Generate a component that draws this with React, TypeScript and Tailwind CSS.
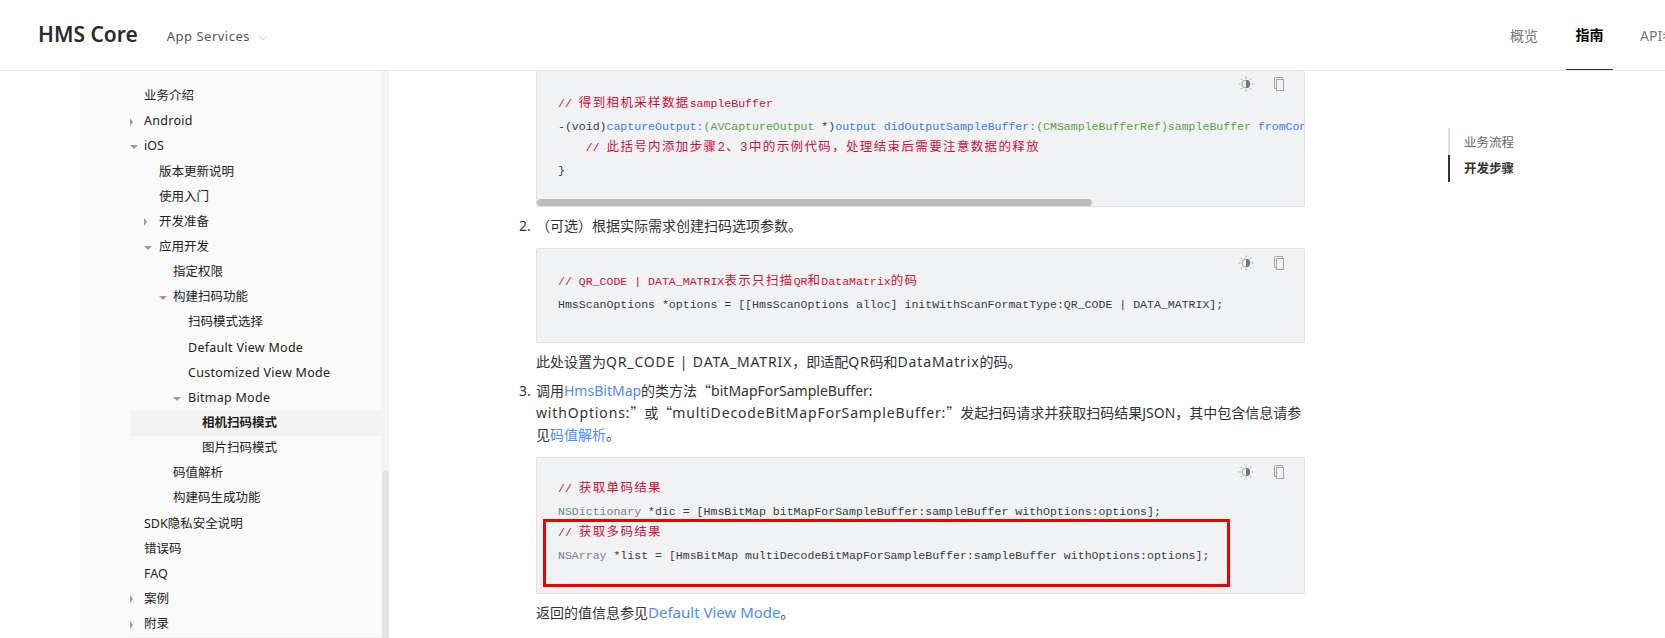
import { type ReactNode } from 'react';
import { ChevronDown } from 'lucide-react';

interface NavRow {
  label: string;
  level: number;
  caret?: 'right' | 'down';
  active?: boolean;
  latin?: boolean;
}

const navRows: NavRow[] = [
  { label: '业务介绍', level: 0 },
  { label: 'Android', level: 0, caret: 'right', latin: true },
  { label: 'iOS', level: 0, caret: 'down' },
  { label: '版本更新说明', level: 1 },
  { label: '使用入门', level: 1 },
  { label: '开发准备', level: 1, caret: 'right' },
  { label: '应用开发', level: 1, caret: 'down' },
  { label: '指定权限', level: 2 },
  { label: '构建扫码功能', level: 2, caret: 'down' },
  { label: '扫码模式选择', level: 3 },
  { label: 'Default View Mode', level: 3, latin: true },
  { label: 'Customized View Mode', level: 3, latin: true },
  { label: 'Bitmap Mode', level: 3, caret: 'down', latin: true },
  { label: '相机扫码模式', level: 4, active: true },
  { label: '图片扫码模式', level: 4 },
  { label: '码值解析', level: 2 },
  { label: '构建码生成功能', level: 2 },
  { label: 'SDK隐私安全说明', level: 0 },
  { label: '错误码', level: 0 },
  { label: 'FAQ', level: 0 },
  { label: '案例', level: 0, caret: 'right' },
  { label: '附录', level: 0, caret: 'right' },
];

const levelPadding = ['pl-[14px]', 'pl-[29px]', 'pl-[43px]', 'pl-[58px]', 'pl-[72px]'];
const caretPadding = ['pl-0', 'pl-[14px]', 'pl-[29px]', 'pl-[43px]', 'pl-[58px]'];

function Caret({ dir }: { dir: 'right' | 'down' }) {
  if (dir === 'right') {
    return <span className="border-y-[4px] border-l-[3px] border-y-transparent border-l-[#999]" />;
  }
  return <span className="mt-[1px] border-x-[4px] border-t-[4px] border-x-transparent border-t-[#999]" />;
}

function Sidebar() {
  return (
    <aside className="flex h-[567px] w-[309px] shrink-0">
      <div className="w-[302px] bg-[#fafafa] pl-[50px] pt-[13px]">
        <div className="border-b border-[#eeeeee]">
          {navRows.map((row) => (
            <div
              key={row.label}
              className={`relative flex h-[25.15px] items-center text-[12.5px] ${levelPadding[row.level]} ${
                row.active ? 'bg-[#f3f3f3] font-bold text-[#222]' : 'text-[#222]'
              } ${row.latin ? 'tracking-[0.28px]' : ''}`}
            >
              {row.caret && (
                <div className={`absolute left-0 top-0 flex h-full items-center ${caretPadding[row.level]}`}>
                  <Caret dir={row.caret} />
                </div>
              )}
              {row.label}
            </div>
          ))}
        </div>
      </div>
      <div className="flex w-[7px] flex-col justify-end bg-[#f4f4f4]">
        <div className="h-[167px] rounded-t-[4px] bg-[#e3e3e3]" />
      </div>
    </aside>
  );
}

function CodeIcons({ clipped }: { clipped?: boolean }) {
  return (
    <div
      className={`absolute right-[19px] flex items-center gap-[19px] text-[#a3a3a3] ${
        clipped ? 'top-[5px]' : 'top-[6px]'
      }`}
    >
      <svg width="16" height="16" viewBox="0 0 16 16" fill="none" stroke="currentColor" strokeWidth="1">
        <circle cx="8" cy="8" r="4" />
        <path d="M8 4a4 4 0 0 1 0 8z" fill="#777" stroke="none" />
        <path d="M8 0.5v2M8 13.5v2M0.5 8h2M13.5 8h2M2.7 2.7l1.4 1.4M11.9 11.9l1.4 1.4M2.7 13.3l1.4-1.4M11.9 4.1l1.4-1.4" />
      </svg>
      <svg width="12" height="16" viewBox="0 0 12 16" fill="none" stroke="currentColor" strokeWidth="1">
        <path d="M2.5 1.5h7v1.5" />
        <rect x="3.5" y="3.5" width="7" height="11" />
        <path d="M1.5 1.5v11h2" />
      </svg>
    </div>
  );
}

function CodeBlock({
  className,
  clipped,
  children,
}: {
  className: string;
  clipped?: boolean;
  children: ReactNode;
}) {
  return (
    <div
      className={`relative w-[769px] overflow-hidden rounded-[2px] border border-[#dfe1e5] bg-[#f1f2f4] font-['Liberation_Mono','Noto_Sans_CJK_SC',monospace] text-[11.55px] leading-[21.5px] whitespace-pre text-[#383a42] ${className}`}
    >
      <CodeIcons clipped={clipped} />
      {children}
    </div>
  );
}

function Comment({ children }: { children: ReactNode }) {
  return <span className="text-[#cf1036]">{children}</span>;
}

// cjk glyphs sit in a double width cell in the code font
function Cjk({ children }: { children: ReactNode }) {
  return <span className="text-[12.5px] tracking-[1.36px]">{children}</span>;
}

function Link({ children }: { children: ReactNode }) {
  return <span className="text-[#4d8cf5]">{children}</span>;
}

// full width quotes, as the cjk font draws them
function Q({ children }: { children: ReactNode }) {
  return <span className="font-['Noto_Sans_CJK_SC',sans-serif] leading-none">{children}</span>;
}

// latin runs in body text are a little wider than the font gives
function L({ children }: { children: ReactNode }) {
  return <span className="tracking-[0.85px]">{children}</span>;
}

function Main() {
  return (
    <main lang="zh-CN" className="ml-[130px] w-[786px] shrink-0 text-[14px] leading-[22px] text-[#333]">
      <div className="ml-[17px]">
        <CodeBlock clipped className="h-[136px] border-t-0 pl-[21px] pt-[22px]">
          <div>
            <Comment>
              // <Cjk>得到相机采样数据</Cjk>sampleBuffer
            </Comment>
          </div>
          <div>
            -(void)<span className="text-[#4078f2]">captureOutput:</span>
            <span className="text-[#5f9e3f]">(AVCaptureOutput </span>*)
            <span className="text-[#4078f2]">output didOutputSampleBuffer:</span>
            <span className="text-[#5f9e3f]">(CMSampleBufferRef)sampleBuffer </span>
            <span className="text-[#4078f2]">fromConnection:</span>
          </div>
          <div>
            <Comment>
              {'    // '}
              <Cjk>此括号内添加步骤2、3中的示例代码，处理结束后需要注意数据的释放</Cjk>
            </Comment>
          </div>
          <div>{'}'}</div>
          <div className="absolute bottom-0 left-0 h-[7px] w-[555px] rounded-[4px] bg-[#bdbdbd]" />
        </CodeBlock>
      </div>

      <div className="mt-[8px] flex">
        <span className="w-[17px] shrink-0">2.</span>
        <span>（可选）根据实际需求创建扫码选项参数。</span>
      </div>

      <div className="ml-[17px] mt-[11px]">
        <CodeBlock className="h-[95px] pl-[21px] pt-[22px]">
          <div>
            <Comment>
              // QR_CODE | DATA_MATRIX<Cjk>表示只扫描</Cjk>QR<Cjk>和</Cjk>DataMatrix<Cjk>的码</Cjk>
            </Comment>
          </div>
          <div>HmsScanOptions *options = [[HmsScanOptions alloc] initWithScanFormatType:QR_CODE | DATA_MATRIX];</div>
        </CodeBlock>
        <p className="mt-[8px] whitespace-nowrap">
          此处设置为<L>QR_CODE | DATA_MATRIX</L>，即适配<L>QR</L>码和<L>DataMatrix</L>的码。
        </p>
      </div>

      <div className="mt-[7px] flex">
        <span className="w-[17px] shrink-0">3.</span>
        <div className="w-[769px]">
          <p>
            调用<Link>HmsBitMap</Link>的类方法<Q>“</Q>bitMapForSampleBuffer:
            <br />
            <L>withOptions:</L>
            <Q>”</Q>或<Q>“</Q>
            <L>multiDecodeBitMapForSampleBuffer:</L>
            <Q>”</Q>发起扫码请求并获取扫码结果JSON，其中包含信息请参
            <br />
            见<Link>码值解析</Link>。
          </p>
          <CodeBlock className="mt-[11px] h-[137px] pl-[21px] pt-[20px]">
            <div>
              <Comment>
                // <Cjk>获取单码结果</Cjk>
              </Comment>
            </div>
            <div>
              <span className="text-[#708090]">NSDictionary</span> *dic = [HmsBitMap bitMapForSampleBuffer:sampleBuffer
              withOptions:options];
            </div>
            <div>
              <Comment>
                // <Cjk>获取多码结果</Cjk>
              </Comment>
            </div>
            <div>
              <span className="text-[#708090]">NSArray</span> *list = [HmsBitMap multiDecodeBitMapForSampleBuffer:sampleBuffer
              withOptions:options];
            </div>
            <div className="absolute left-[6px] top-[61px] h-[68px] w-[687px] border-[3px] border-[#f00000]" />
          </CodeBlock>
          <p className="mt-[8px]">
            返回的值信息参见
            <span className="text-[15px] leading-none text-[#4d8cf5]">Default View Mode</span>。
          </p>
        </div>
      </div>
    </main>
  );
}

function Toc() {
  return (
    <nav className="ml-[143px] mt-[57px] w-[120px] text-[12.5px]">
      <div className="flex h-[27px] items-center border-l-2 border-[#dddddd] pl-[14px] pt-[3px] text-[#666]">业务流程</div>
      <div className="flex h-[27px] items-center border-l-2 border-[#333] pl-[14px] pt-[1px] font-bold text-[#333]">开发步骤</div>
    </nav>
  );
}

export default function App() {
  return (
    <div className="h-[638px] w-[1665px] overflow-hidden bg-white font-['Noto_Sans','Noto_Sans_CJK_SC',sans-serif]">
      <header className="flex h-[71px] items-center border-b border-[#e8e8e8] pl-[38px]">
        <span className="text-[21px] font-semibold text-[#2b2b2b]">HMS Core</span>
        <span className="ml-[29px] mt-[3px] text-[13px] tracking-[0.5px] text-[#555]">App Services</span>
        <ChevronDown className="ml-[6px] mt-[6px] h-[14px] w-[14px] text-[#aaa]" strokeWidth={1.25} />
        <nav className="ml-auto flex h-full w-[155px] shrink-0 overflow-hidden text-[14px]">
          <span className="flex w-[56px] shrink-0 items-center text-[#777]">概览</span>
          <span className="flex h-[71px] w-[47px] shrink-0 items-center justify-center border-b-2 border-[#333] font-bold text-black">
            指南
          </span>
          <span className="ml-[27px] flex shrink-0 items-center whitespace-nowrap text-[#777]">API参考</span>
        </nav>
      </header>
      <div className="flex pl-[80px]">
        <Sidebar />
        <Main />
        <Toc />
      </div>
    </div>
  );
}
